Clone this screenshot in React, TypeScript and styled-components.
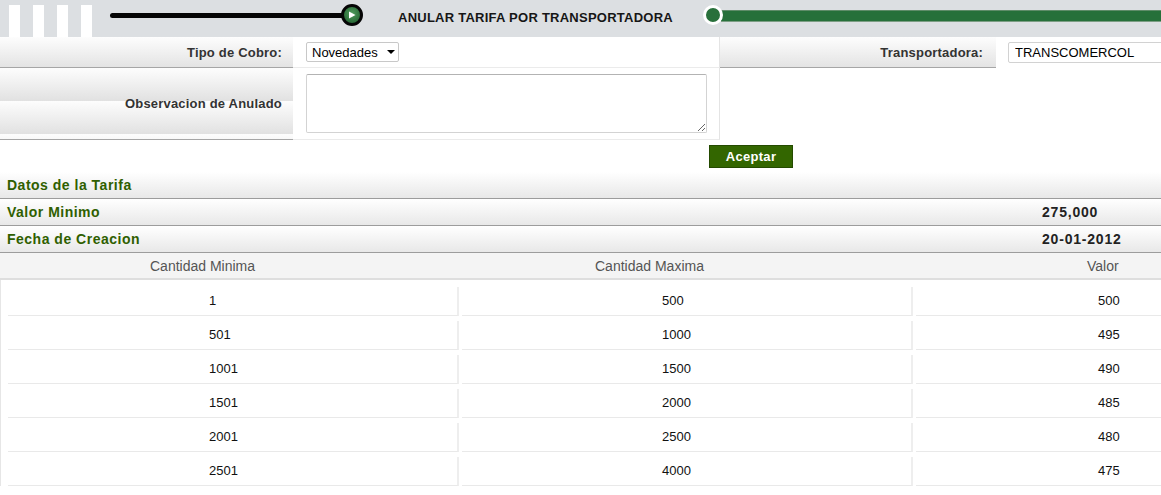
import React from "react";
import styled, { createGlobalStyle } from "styled-components";

const GlobalStyle = createGlobalStyle`
  html, body {
    margin: 0;
    padding: 0;
    background: #fff;
  }
  body {
    font-family: "Liberation Sans", Arial, sans-serif;
    color: #111;
  }
`;

const Page = styled.div`
  width: 1161px;
  overflow: hidden;
`;

/* ---------- top bar ---------- */

const TopBar = styled.header`
  height: 37px;
  background: #dcdfe2;
  display: flex;
  align-items: flex-start;
`;

const Stripes = styled.div`
  display: flex;
  gap: 13px;
  padding: 5px 0 0 9px;
  height: 32px;
`;

const Stripe = styled.span`
  width: 11px;
  background: #fff;
`;

const Slider = styled.div`
  display: flex;
  align-items: center;
  height: 22px;
  margin: 4px 0 0 18px;
`;

const Track = styled.div`
  width: 236px;
  height: 5px;
  border-radius: 3px;
  background: #050505;
`;

const Knob = styled.div`
  width: 16px;
  height: 16px;
  margin-left: -5px;
  border: 3px solid #050505;
  border-radius: 50%;
  background: radial-gradient(circle at 50% 40%, #4f9b5c, #1d5a2b);
  display: flex;
  align-items: center;
  justify-content: center;
`;

const Title = styled.h1`
  margin: 0 0 0 35px;
  line-height: 36px;
  font-size: 13px;
  font-weight: 700;
  letter-spacing: 0.25px;
  color: #161616;
  white-space: nowrap;
`;

const Progress = styled.div`
  width: 458px;
  margin: 4px 0 0 auto;
  height: 22px;
  display: flex;
  align-items: center;
`;

const Dot = styled.span`
  width: 14px;
  height: 14px;
  border: 3px solid #fff;
  border-radius: 50%;
  background: #28703b;
  position: relative;
  z-index: 1;
  flex-shrink: 0;
`;

const Bar = styled.div`
  flex: 1;
  height: 10px;
  margin-left: -2px;
  margin-top: 2px;
  background: #26703a;
  border-top: 1px solid #5f8c69;
  border-bottom: 1px solid #7c9e84;
`;

/* ---------- form ---------- */

const FormGrid = styled.div`
  display: grid;
  grid-template-columns: 293px 427px 276px 1fr;
  grid-template-rows: 31px 72px;
`;

const LabelCell = styled.div<{ $pad?: number }>`
  display: flex;
  align-items: center;
  justify-content: flex-end;
  padding-right: ${(p) => p.$pad ?? 11}px;
  background: linear-gradient(#fdfdfd, #e1e1e1) 0 0 / 100% 33px repeat-y;
  border-bottom: 1px solid #a6a6a6;
  font-size: 13px;
  font-weight: 700;
  letter-spacing: 0.2px;
  color: #333;
  white-space: nowrap;
`;

const FieldCell = styled.div<{ $top?: boolean }>`
  display: flex;
  align-items: ${(p) => (p.$top ? "flex-start" : "center")};
  padding: ${(p) => (p.$top ? "6px 0 0 13px" : "0 0 0 13px")};
  border-bottom: 1px solid #ebebeb;
  border-right: 1px solid #e4e4e4;
`;

const InputCell = styled.div`
  display: flex;
  align-items: center;
  padding-left: 12px;
  overflow: hidden;
`;

const EmptyCell = styled.div`
  grid-column: 3 / 5;
`;

const SelectWrap = styled.div`
  position: relative;
  width: 93px;
  height: 20px;
`;

const Select = styled.select`
  appearance: none;
  width: 100%;
  height: 100%;
  box-sizing: border-box;
  border: 1px solid #c8c8c8;
  border-radius: 2px;
  background: #fff;
  padding: 0 0 0 5px;
  font-family: "Liberation Sans", Arial, sans-serif;
  font-size: 13px;
  color: #000;
`;

const Caret = styled.span`
  position: absolute;
  right: 4px;
  top: 8px;
  width: 0;
  height: 0;
  border-left: 4px solid transparent;
  border-right: 4px solid transparent;
  border-top: 4px solid #000;
  pointer-events: none;
`;

const TextArea = styled.textarea`
  width: 401px;
  height: 59px;
  box-sizing: border-box;
  border: 1px solid #d3d3d3;
  border-top-color: #b3b3b3;
  border-radius: 2px;
  font-family: "Liberation Sans", Arial, sans-serif;
  font-size: 13px;
`;

const TextInput = styled.input`
  width: 170px;
  height: 21px;
  box-sizing: border-box;
  border: 1px solid #d2d2d2;
  border-radius: 2px;
  padding: 0 6px;
  font-family: "Liberation Sans", Arial, sans-serif;
  font-size: 13px;
  color: #000;
`;

const Actions = styled.div`
  height: 32px;
  box-sizing: border-box;
  padding: 5px 0 0 709px;
`;

const AcceptButton = styled.button`
  width: 84px;
  height: 23px;
  border: 1px solid #244a00;
  background: #336600;
  color: #fff;
  font-family: "Liberation Sans", Arial, sans-serif;
  font-size: 13px;
  font-weight: 700;
  letter-spacing: 0.3px;
  padding: 0;
`;

/* ---------- tariff data ---------- */

const InfoRow = styled.div`
  display: grid;
  grid-template-columns: 1035px 1fr;
  height: 27px;
  box-sizing: border-box;
  align-items: center;
  background: linear-gradient(#ffffff, #e8e8e8);
  border-bottom: 1px solid #9c9c9c;
  font-size: 14px;
  font-weight: 700;
`;

const InfoLabel = styled.span`
  padding-left: 7px;
  color: #2f5f00;
  letter-spacing: 0.5px;
`;

const InfoValue = styled.span`
  padding-left: 7px;
  color: #222;
  letter-spacing: 0.8px;
`;

const TableHead = styled.div`
  display: grid;
  grid-template-columns: 451px 451px 1fr;
  column-gap: 3px;
  padding-left: 8px;
  height: 27px;
  box-sizing: border-box;
  align-items: center;
  background: #f4f4f4;
  border-bottom: 2px solid #dedede;
  font-size: 14px;
  color: #555;
`;

const HeadCell = styled.span<{ $indent: number }>`
  padding-left: ${(p) => p.$indent}px;
`;

const TableBody = styled.div`
  border-left: 1px solid #e6e6e6;
  padding: 7px 0 0 7px;
`;

const Row = styled.div`
  display: grid;
  grid-template-columns: 451px 451px 1fr;
  column-gap: 3px;
  margin-bottom: 5px;
`;

const Cell = styled.div<{ $indent: number; $last?: boolean }>`
  height: 29px;
  box-sizing: border-box;
  line-height: 28px;
  padding-left: ${(p) => p.$indent}px;
  border-bottom: 1px solid #e9e9e9;
  border-right: ${(p) => (p.$last ? "none" : "2px solid #eeeeee")};
  font-size: 13px;
  color: #111;
`;

const rows = [
  ["1", "500", "500"],
  ["501", "1000", "495"],
  ["1001", "1500", "490"],
  ["1501", "2000", "485"],
  ["2001", "2500", "480"],
  ["2501", "4000", "475"],
];

export default function App() {
  return (
    <Page>
      <GlobalStyle />
      <TopBar>
        <Stripes>
          <Stripe />
          <Stripe />
          <Stripe />
          <Stripe />
        </Stripes>
        <Slider>
          <Track />
          <Knob>
            <svg width="8" height="8" viewBox="0 0 8 8">
              <polygon points="1,0.5 7.5,4 1,7.5" fill="#fff" />
            </svg>
          </Knob>
        </Slider>
        <Title>ANULAR TARIFA POR TRANSPORTADORA</Title>
        <Progress>
          <Dot />
          <Bar />
        </Progress>
      </TopBar>

      <FormGrid>
        <LabelCell>Tipo de Cobro:</LabelCell>
        <FieldCell>
          <SelectWrap>
            <Select defaultValue="Novedades">
              <option>Novedades</option>
            </Select>
            <Caret />
          </SelectWrap>
        </FieldCell>
        <LabelCell $pad={13}>Transportadora:</LabelCell>
        <InputCell>
          <TextInput defaultValue="TRANSCOMERCOL" />
        </InputCell>

        <LabelCell>Observacion de Anulado</LabelCell>
        <FieldCell $top>
          <TextArea />
        </FieldCell>
        <EmptyCell />
      </FormGrid>

      <Actions>
        <AcceptButton>Aceptar</AcceptButton>
      </Actions>

      <InfoRow>
        <InfoLabel>Datos de la Tarifa</InfoLabel>
      </InfoRow>
      <InfoRow>
        <InfoLabel>Valor Minimo</InfoLabel>
        <InfoValue>275,000</InfoValue>
      </InfoRow>
      <InfoRow>
        <InfoLabel>Fecha de Creacion</InfoLabel>
        <InfoValue>20-01-2012</InfoValue>
      </InfoRow>

      <TableHead>
        <HeadCell $indent={142}>Cantidad Minima</HeadCell>
        <HeadCell $indent={133}>Cantidad Maxima</HeadCell>
        <HeadCell $indent={171}>Valor</HeadCell>
      </TableHead>
      <TableBody>
        {rows.map((r) => (
          <Row key={r[0]}>
            <Cell $indent={201}>{r[0]}</Cell>
            <Cell $indent={200}>{r[1]}</Cell>
            <Cell $indent={182} $last>
              {r[2]}
            </Cell>
          </Row>
        ))}
      </TableBody>
    </Page>
  );
}
